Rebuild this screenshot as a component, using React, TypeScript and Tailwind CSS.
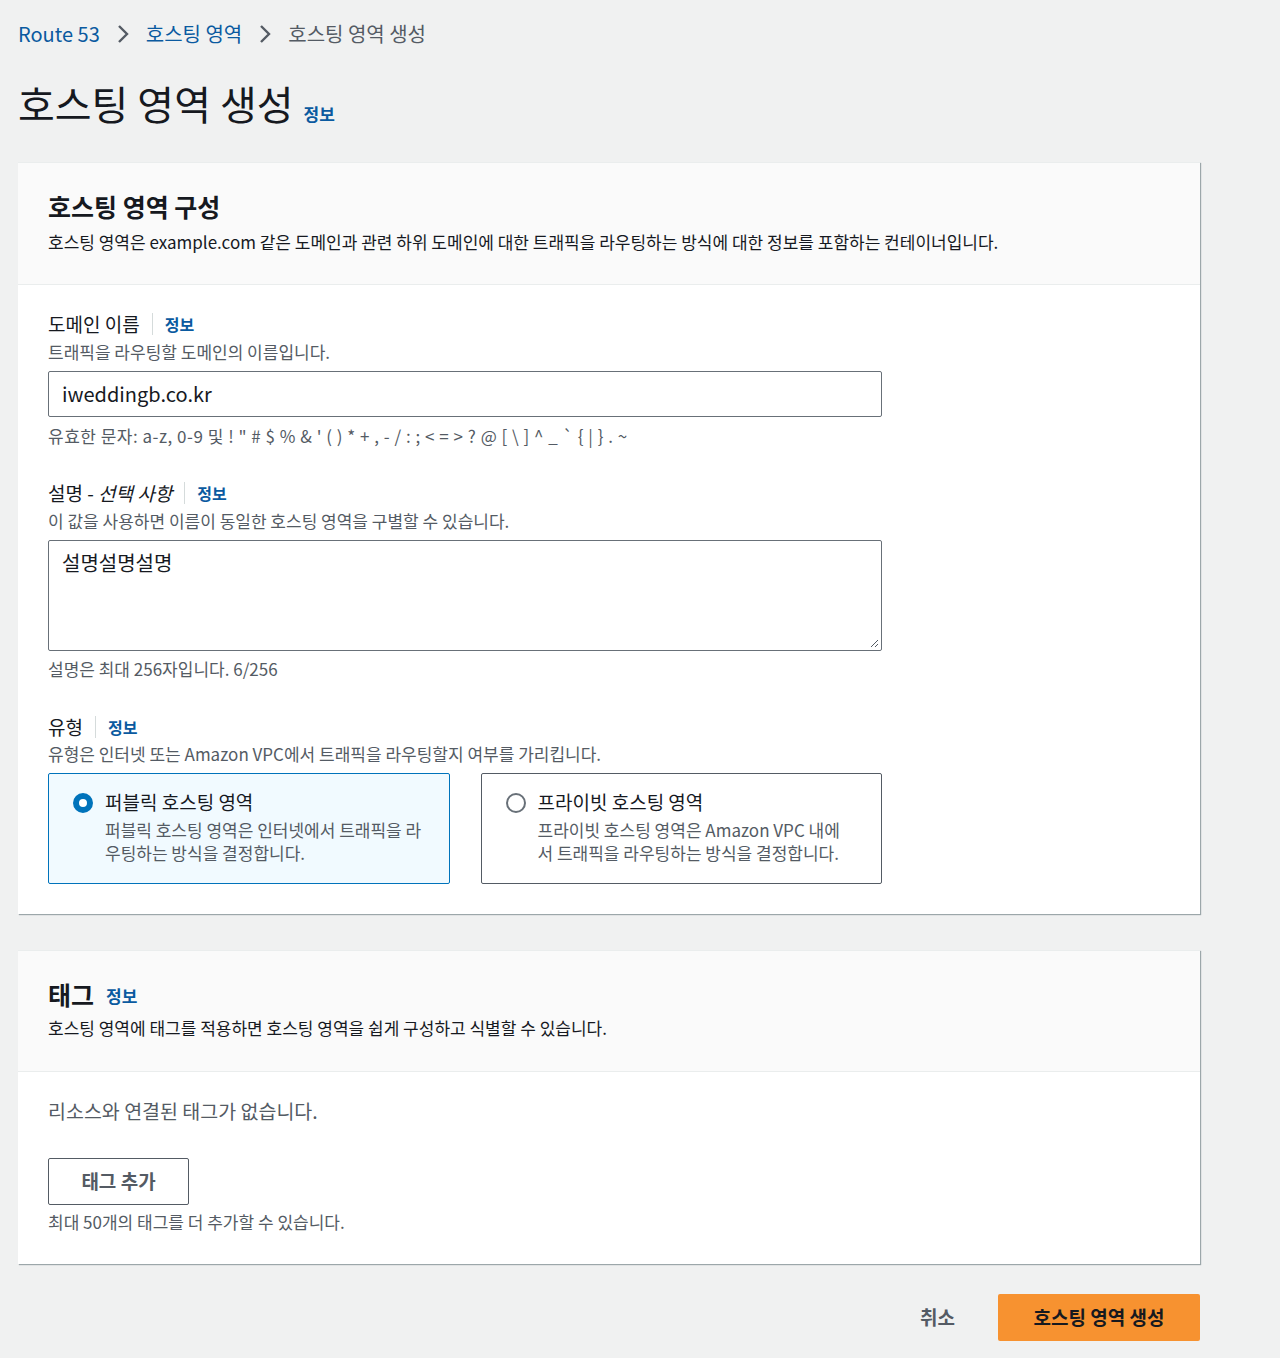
import React from 'react';

const font = { fontFamily: '"Noto Sans CJK KR", "Noto Sans", "Liberation Sans", sans-serif' };

function Info({ className = '' }: { className?: string }) {
    return <span className={`font-bold text-[#0a5aa0] ${className}`}>정보</span>;
}

function Label({ children }: { children: React.ReactNode }) {
    return (
        <div className="flex items-center text-[19px] leading-[26px] text-[#16191f]">
            <span>{children}</span>
            <span className="mx-3 h-[22px] w-px bg-[#d5dbdb]" />
            <Info className="text-[16px]" />
        </div>
    );
}

function Hint({ children, className = '' }: { children: React.ReactNode; className?: string }) {
    return <p className={`text-[17px] leading-[24px] text-[#545b64] ${className}`}>{children}</p>;
}

function Chevron() {
    return (
        <svg width="14" height="20" viewBox="0 0 14 20" className="mx-4">
            <path d="M3 2l8 8-8 8" fill="none" stroke="#545b64" strokeWidth="2.4" />
        </svg>
    );
}

function RadioCard({ title, text, selected }: { title: string; text: string; selected?: boolean }) {
    return (
        <div
            className={
                selected
                    ? 'flex h-[111px] flex-1 gap-[12px] rounded-[2px] border border-[#0073bb] bg-[#f1faff] pl-[24px] pr-[27px] pt-[15px]'
                    : 'flex h-[111px] flex-1 gap-[12px] rounded-[2px] border border-[#545b64] bg-white pl-[24px] pr-[27px] pt-[15px]'
            }
        >
            {selected ? (
                <span className="mt-[4px] h-[20px] w-[20px] shrink-0 rounded-full border-[6px] border-[#0073bb] bg-white" />
            ) : (
                <span className="mt-[4px] h-[20px] w-[20px] shrink-0 rounded-full border-2 border-[#687078] bg-white" />
            )}
            <div>
                <div className="text-[19px] leading-[26px]">{title}</div>
                <p className="mt-[3px] text-[17px] leading-[23px] text-[#545b64]">{text}</p>
            </div>
        </div>
    );
}

export default function App() {
    return (
        <div style={font} className="min-h-[1358px] bg-[#f0f1f1] px-[18px] pt-[20px] text-[#16191f]">
            <nav className="flex items-center text-[20px] leading-[28px]">
                <span className="text-[#0a5aa0]">Route 53</span>
                <Chevron />
                <span className="text-[#0a5aa0]">호스팅 영역</span>
                <Chevron />
                <span className="text-[#545b64]">호스팅 영역 생성</span>
            </nav>

            <div className="mt-[30px] flex items-end">
                <h1 className="text-[40px] leading-[50px] font-normal">호스팅 영역 생성</h1>
                <Info className="ml-[10px] mb-[2px] text-[17px]" />
            </div>

            <div className="mt-[34px] w-[1182px]">
                <section className="bg-white shadow-[1px_1px_1px_rgba(0,28,36,0.35)] border-t border-[#eaeded]">
                    <div className="bg-[#fafafa] border-b border-[#eaeded] px-[30px] pt-[26px] pb-[29px]">
                        <h2 className="text-[25px] leading-[34px] font-bold">호스팅 영역 구성</h2>
                        <p className="mt-[6px] text-[17px] leading-[26px] text-[#16191f]">
                            호스팅 영역은 example.com 같은 도메인과 관련 하위 도메인에 대한 트래픽을 라우팅하는 방식에 대한 정보를 포함하는 컨테이너입니다.
                        </p>
                    </div>

                    <div className="px-[30px] pt-[26px] pb-[30px]">
                        <Label>도메인 이름</Label>
                        <Hint className="mt-[3px]">트래픽을 라우팅할 도메인의 이름입니다.</Hint>
                        <div className="mt-[7px] flex h-[46px] w-[834px] items-center rounded-[2px] border border-[#687078] px-[13px] text-[20px]">
                            iweddingb.co.kr
                        </div>
                        <Hint className="mt-[7px] tracking-[0.5px]">
                            유효한 문자: a-z, 0-9 및 ! &quot; # $ % &amp; &apos; ( ) * + , - / : ; &lt; = &gt; ? @ [ \ ] ^ _ ` {'{'} | {'}'} . ~
                        </Hint>

                        <div className="mt-[32px]">
                            <Label>
                                설명 - <i>선택 사항</i>
                            </Label>
                        </div>
                        <Hint className="mt-[3px]">이 값을 사용하면 이름이 동일한 호스팅 영역을 구별할 수 있습니다.</Hint>
                        <div className="relative mt-[7px] h-[111px] w-[834px] rounded-[2px] border border-[#687078] px-[13px] pt-[8px] text-[20px] leading-[28px]">
                            설명설명설명
                            <svg width="10" height="10" viewBox="0 0 10 10" className="absolute right-[2px] bottom-[2px]">
                                <path d="M9 2L2 9M9 6L6 9" stroke="#545b64" strokeWidth="1" />
                            </svg>
                        </div>
                        <Hint className="mt-[6px]">설명은 최대 256자입니다. 6/256</Hint>

                        <div className="mt-[33px]">
                            <Label>유형</Label>
                        </div>
                        <Hint className="mt-[2px]">유형은 인터넷 또는 Amazon VPC에서 트래픽을 라우팅할지 여부를 가리킵니다.</Hint>
                        <div className="mt-[7px] flex w-[834px] gap-[31px]">
                            <RadioCard selected title="퍼블릭 호스팅 영역" text="퍼블릭 호스팅 영역은 인터넷에서 트래픽을 라우팅하는 방식을 결정합니다." />
                            <RadioCard title="프라이빗 호스팅 영역" text="프라이빗 호스팅 영역은 Amazon VPC 내에서 트래픽을 라우팅하는 방식을 결정합니다." />
                        </div>
                    </div>
                </section>

                <section className="mt-[36px] bg-white shadow-[1px_1px_1px_rgba(0,28,36,0.35)] border-t border-[#eaeded]">
                    <div className="bg-[#fafafa] border-b border-[#eaeded] px-[30px] pt-[26px] pb-[30px]">
                        <div className="flex items-end">
                            <h2 className="text-[25px] leading-[34px] font-bold">태그</h2>
                            <Info className="ml-3 mb-[3px] text-[17px]" />
                        </div>
                        <p className="mt-[4px] text-[17px] leading-[26px]">
                            호스팅 영역에 태그를 적용하면 호스팅 영역을 쉽게 구성하고 식별할 수 있습니다.
                        </p>
                    </div>
                    <div className="px-[30px] pt-[25px] pb-[30px]">
                        <p className="text-[19.5px] leading-[28px] text-[#545b64]">리소스와 연결된 태그가 없습니다.</p>
                        <button className="mt-[33px] flex h-[47px] w-[141px] items-center justify-center rounded-[2px] border border-[#545b64] bg-white text-[19px] font-bold text-[#545b64]">
                            태그 추가
                        </button>
                        <Hint className="mt-[5px]">최대 50개의 태그를 더 추가할 수 있습니다.</Hint>
                    </div>
                </section>

                <div className="mt-[30px] flex items-center justify-end">
                    <button className="mr-[43px] text-[19px] font-bold text-[#545b64]">취소</button>
                    <button className="flex h-[47px] w-[202px] items-center justify-center rounded-[2px] bg-[#f79230] text-[19px] font-bold text-[#16191f]">
                        호스팅 영역 생성
                    </button>
                </div>
            </div>
        </div>
    );
}
